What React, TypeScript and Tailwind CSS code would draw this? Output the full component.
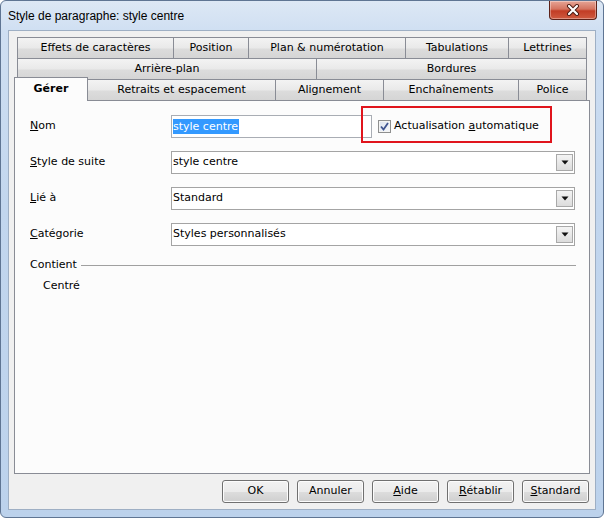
import React from "react";

const tab =
  "h-[21px] flex items-center justify-center border-t border-l border-[#898c95] bg-[linear-gradient(to_bottom,#f3f3f3_0%,#e9e9e9_50%,#dcdcdc_55%,#d5d5d5_100%)] text-[11px] text-black whitespace-nowrap";

const btn =
  "w-[67px] h-[23px] rounded-[3px] border border-[#707070] bg-[linear-gradient(to_bottom,#f2f2f2_0%,#ebebeb_50%,#dddddd_51%,#cfcfcf_100%)] shadow-[inset_0_0_0_1px_#fcfcfc] flex items-center justify-center text-[11px] text-black";

function Arrow() {
  return (
    <div className="ml-auto mr-[1px] w-[17px] h-[17px] border border-[#a9a9a9] bg-[linear-gradient(to_bottom,#f4f4f4,#dcdcdc)] flex items-center justify-center">
      <svg width="8" height="5" viewBox="0 0 8 5">
        <path d="M0.5 0.5 L7.5 0.5 L4 4.5 Z" fill="#111" />
      </svg>
    </div>
  );
}

function Combo({ value }: { value: string }) {
  return (
    <div className="w-[404px] h-[23px] border border-[#a4a4a4] bg-white flex items-center pl-[1px] text-[11px] text-black">
      <span>{value}</span>
      <Arrow />
    </div>
  );
}

export default function App() {
  return (
    <div className="relative w-[604px] h-[518px] overflow-hidden rounded-[6px] border border-[#5f7593] bg-[linear-gradient(to_bottom,#dde8f5_0%,#cfdff2_6%,#c2d6ee_40%,#bcd2ec_100%)] flex flex-col font-['DejaVu_Sans',sans-serif]">
      {/* Title bar */}
      <div className="h-[29px] flex items-center pl-[7px] pt-[1px] text-[12px] text-black font-['Liberation_Sans',sans-serif]">
        Style de paragraphe: style centre
      </div>
      {/* Close button */}
      <div className="absolute top-0 right-[6px] w-[48px] h-[19px] rounded-b-[4px] border border-t-0 border-[#5d2219] bg-[linear-gradient(to_bottom,#e6a596_0%,#d4735f_45%,#c23d25_55%,#cf5a40_100%)] shadow-[inset_0_0_0_1px_rgba(255,255,255,0.35)] flex items-center justify-center">
        <svg width="14" height="12" viewBox="0 0 14 12">
          <path d="M3 2 L11 10 M11 2 L3 10" stroke="#4a1a12" strokeWidth="4" strokeLinecap="round" />
          <path d="M3 2 L11 10 M11 2 L3 10" stroke="#ffffff" strokeWidth="2.2" strokeLinecap="round" />
        </svg>
      </div>

      {/* Client area */}
      <div className="mx-[7px] h-[480px] border border-[#9eafc4] bg-[#f0f0f0] flex flex-col pt-[6px]">
        {/* Row 1 */}
        <div className="flex ml-[8px]">
          <div className={tab + " w-[156px]"}>Effets de caractères</div>
          <div className={tab + " w-[75px]"}>Position</div>
          <div className={tab + " w-[157px]"}>Plan &amp; numérotation</div>
          <div className={tab + " w-[103px]"}>Tabulations</div>
          <div className={tab + " w-[79px] border-r"}>Lettrines</div>
        </div>
        {/* Row 2 */}
        <div className="flex ml-[8px]">
          <div className={tab + " w-[299px]"}>Arrière-plan</div>
          <div className={tab + " w-[271px] border-r"}>Bordures</div>
        </div>
        {/* Row 3 */}
        <div className="flex items-end h-[21px] ml-[5px]">
          <div className="relative z-10 w-[74px] h-[24px] mb-[-1px] border-t border-l border-r border-[#898c95] bg-[#fcfcfc] flex items-center justify-center text-[11px] font-bold text-black pb-[1px]">
            Gérer
          </div>
          <div className={tab + " w-[187px] border-l-0"}>Retraits et espacement</div>
          <div className={tab + " w-[108px]"}>Alignement</div>
          <div className={tab + " w-[135px]"}>Enchaînements</div>
          <div className={tab + " w-[69px] border-r"}>Police</div>
        </div>

        {/* Panel */}
        <div className="ml-[5px] w-[576px] h-[374px] border border-[#898c95] bg-[#fcfcfc] flex flex-col pl-[15px] pr-[13px] pt-[14px] text-[11px] text-black">
          <div className="flex flex-col gap-[13px]">
            <div className="flex items-center h-[23px]">
              <div className="w-[141px]">
                <span className="underline">N</span>om
              </div>
              <div className="w-[201px] h-[23px] border border-[#a9adb4] bg-white flex items-center pl-[1px]">
                <span className="bg-[#3399ff] text-white leading-[15px] pr-[1px]">style centre</span>
              </div>
              <div className="ml-[6px] w-[13px] h-[13px] border border-[#8e8f8f] bg-[linear-gradient(135deg,#dce3ef,#f6f8fb)] shadow-[inset_0_0_0_1px_#f4f4f4] flex items-center justify-center">
                <svg width="9" height="9" viewBox="0 0 9 9">
                  <path d="M1 4.5 L3.5 7.5 L8 1" fill="none" stroke="#3f5490" strokeWidth="1.8" />
                </svg>
              </div>
              <div className="ml-[3px]">
                Actualisation <span className="underline">a</span>utomatique
              </div>
            </div>
            <div className="flex items-center h-[23px]">
              <div className="w-[141px]">
                <span className="underline">S</span>tyle de suite
              </div>
              <Combo value="style centre" />
            </div>
            <div className="flex items-center h-[23px]">
              <div className="w-[141px]">
                <span className="underline">L</span>ié à
              </div>
              <Combo value="Standard" />
            </div>
            <div className="flex items-center h-[23px]">
              <div className="w-[141px]">
                <span className="underline">C</span>atégorie
              </div>
              <Combo value="Styles personnalisés" />
            </div>
          </div>
          <div className="mt-[12px] flex items-center h-[14px]">
            <span>Contient</span>
            <div className="ml-[4px] flex-1 h-px bg-[#a0a0a0]" />
          </div>
          <div className="mt-[7px] pl-[13px] h-[14px] flex items-center">Centré</div>
        </div>

        {/* Buttons */}
        <div className="mt-[6px] flex justify-end gap-[8px] pr-[6px]">
          <div className={btn + " border-[#3c7fb1] shadow-[inset_0_0_0_1px_#c7e3f6]"}>OK</div>
          <div className={btn}>Annuler</div>
          <div className={btn}>
            <span className="underline">A</span>ide
          </div>
          <div className={btn}>
            <span className="underline">R</span>établir
          </div>
          <div className={btn}>
            <span className="underline">S</span>tandard
          </div>
        </div>
      </div>

      {/* Red annotation */}
      <div className="absolute left-[360px] top-[105px] w-[191px] h-[37px] border-2 border-[#e0141c]" />
    </div>
  );
}
